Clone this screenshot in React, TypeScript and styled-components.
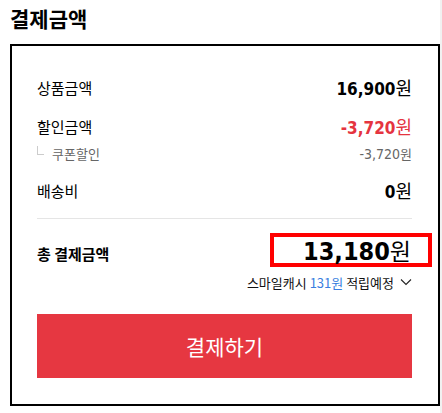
import styled, { createGlobalStyle } from 'styled-components';

const GlobalStyle = createGlobalStyle`
    html, body {
        margin: 0;
        padding: 0;
        background: #fff;
    }
    body {
        font-family: "Noto Sans CJK KR", "Noto Sans", sans-serif;
        color: #000;
    }
`;

const PageStl = styled.div`
    display: flex;
    width: 442px;
    min-height: 413px;
`;

const MainStl = styled.div`
    flex: 1;
    padding-left: 10px;
`;

const GutterStl = styled.div`
    width: 2px;
    background: #f1f1f1;
`;

const TitleStl = styled.h2`
    margin: 0 0 11px;
    padding-top: 3px;
    font-size: 21px;
    line-height: 30px;
    font-weight: 700;
`;

const PanelStl = styled.div`
    width: 430px;
    box-sizing: border-box;
    border: 2px solid #000;
    padding: 29px 26px 26px 25px;
`;

const RowStl = styled.div<{ $gap?: number }>`
    display: flex;
    justify-content: space-between;
    align-items: center;
    height: 24px;
    margin-top: ${p => p.$gap ?? 0}px;
`;

const LabelStl = styled.span`
    font-size: 15px;
    color: #000;
`;

const AmountStl = styled.span<{ $red?: boolean }>`
    font-size: 18px;
    color: ${p => (p.$red ? '#e5343f' : '#000')};
    b {
        font-family: "DejaVu Sans Condensed", "DejaVu Sans", sans-serif;
        font-stretch: condensed;
        font-size: 17px;
        font-weight: 700;
    }
`;

const SubRowStl = styled.div`
    display: flex;
    justify-content: space-between;
    align-items: center;
    height: 18px;
    margin-top: 6px;
    color: #666;
    font-size: 13px;
    .label {
        display: flex;
        align-items: center;
        gap: 8px;
    }
    .mark {
        display: inline-block;
        width: 6px;
        height: 8px;
        margin-top: -6px;
        border-left: 1px solid #ccc;
        border-bottom: 1px solid #ccc;
    }
    .num {
        font-family: "DejaVu Sans Condensed", "DejaVu Sans", sans-serif;
        font-stretch: condensed;
        font-size: 14px;
    }
`;

const DividerStl = styled.hr`
    margin: 16px 0 0;
    border: 0;
    border-top: 1px solid #e5e5e5;
`;

const TotalRowStl = styled.div`
    display: flex;
    justify-content: space-between;
    align-items: baseline;
    margin-top: 14px;
    .label {
        font-size: 15px;
        font-weight: 700;
    }
`;

const TotalAmountStl = styled.span`
    display: inline-flex;
    align-items: baseline;
    height: 26px;
    line-height: 26px;
    margin-right: -20px;
    padding: 0 17px 0 29px;
    border: 4px solid #f00;
    font-size: 25px;
    b {
        font-family: "DejaVu Sans Condensed", "DejaVu Sans", sans-serif;
        font-stretch: condensed;
        font-weight: 700;
    }
    span {
        font-size: 23px;
    }
`;

const CashStl = styled.div`
    display: flex;
    justify-content: flex-end;
    align-items: center;
    gap: 4px;
    margin-top: 7px;
    height: 16px;
    font-size: 13px;
    color: #111;
    em {
        font-style: normal;
        color: #3a7fe0;
    }
    svg {
        margin-left: 2px;
    }
`;

const PayButtonStl = styled.button`
    display: block;
    width: 100%;
    height: 64px;
    margin-top: 24px;
    border: 0;
    background: #e63741;
    color: #fff;
    font-family: "Noto Sans CJK KR", sans-serif;
    font-size: 21px;
    cursor: pointer;
`;

const Chevron = () => (
    <svg width="12" height="8" viewBox="0 0 12 8" fill="none">
        <polyline points="1,1.5 6,6.5 11,1.5" stroke="#222" strokeWidth="1.1" />
    </svg>
);

export default function App() {
    return (
        <PageStl>
            <GlobalStyle />
            <MainStl>
                <TitleStl>결제금액</TitleStl>
                <PanelStl>
                    <RowStl>
                        <LabelStl>상품금액</LabelStl>
                        <AmountStl><b>16,900</b>원</AmountStl>
                    </RowStl>
                    <RowStl $gap={15}>
                        <LabelStl>할인금액</LabelStl>
                        <AmountStl $red><b>-3,720</b>원</AmountStl>
                    </RowStl>
                    <SubRowStl>
                        <span className='label'>
                            <span className='mark' />
                            쿠폰할인
                        </span>
                        <span><span className='num'>-3,720</span>원</span>
                    </SubRowStl>
                    <RowStl $gap={16}>
                        <LabelStl>배송비</LabelStl>
                        <AmountStl><b>0</b>원</AmountStl>
                    </RowStl>
                    <DividerStl />
                    <TotalRowStl>
                        <span className='label'>총 결제금액</span>
                        <TotalAmountStl><b>13,180</b><span>원</span></TotalAmountStl>
                    </TotalRowStl>
                    <CashStl>
                        <span>스마일캐시 <em>131원</em> 적립예정</span>
                        <Chevron />
                    </CashStl>
                    <PayButtonStl>결제하기</PayButtonStl>
                </PanelStl>
            </MainStl>
            <GutterStl />
        </PageStl>
    );
}
